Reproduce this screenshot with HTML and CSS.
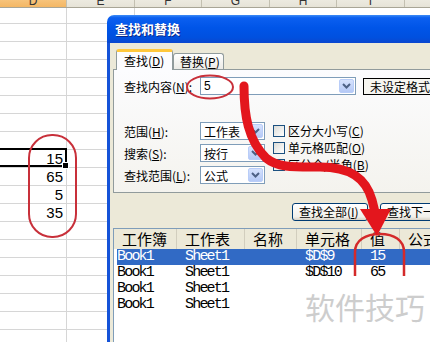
FILE: index.html
```html
<!DOCTYPE html>
<html lang="zh-CN">
<head>
<meta charset="utf-8">
<title>查找和替换</title>
<link rel="stylesheet" href="styles.css">
</head>
<body>
<div class="screen">
  <div class="sheet">
    <div class="colhead">
      <div class="ch ch-sel">D</div><div class="ch">E</div><div class="ch">F</div><div class="ch">G</div><div class="ch">H</div><div class="ch">I</div><div class="ch">J</div>
    </div>
    <div class="grid">
      <div class="row row-first"><div class="cell"></div><div class="cell"></div></div>
      <div class="row"><div class="cell"></div><div class="cell"></div></div>
      <div class="row"><div class="cell"></div><div class="cell"></div></div>
      <div class="row"><div class="cell"></div><div class="cell"></div></div>
      <div class="row"><div class="cell"></div><div class="cell"></div></div>
      <div class="row"><div class="cell"></div><div class="cell"></div></div>
      <div class="row"><div class="cell"></div><div class="cell"></div></div>
      <div class="row"><div class="cell"></div><div class="cell"></div></div>
      <div class="row"><div class="cell num active">15</div><div class="cell"></div></div>
      <div class="row"><div class="cell num">65</div><div class="cell"></div></div>
      <div class="row"><div class="cell num">5</div><div class="cell"></div></div>
      <div class="row"><div class="cell num">35</div><div class="cell"></div></div>
      <div class="row"><div class="cell"></div><div class="cell"></div></div>
      <div class="row"><div class="cell"></div><div class="cell"></div></div>
      <div class="row"><div class="cell"></div><div class="cell"></div></div>
      <div class="row"><div class="cell"></div><div class="cell"></div></div>
      <div class="row"><div class="cell"></div><div class="cell"></div></div>
      <div class="row"><div class="cell"></div><div class="cell"></div></div>
      <div class="row"><div class="cell"></div><div class="cell"></div></div>
    </div>
  </div>

  <div class="dialog">
    <div class="titlebar">查找和替换</div>
    <div class="dlg-body">
      <div class="tabs">
        <div class="tab tab-active">查找(<u>D</u>)</div>
        <div class="tab">替换(<u>P</u>)</div>
      </div>
      <div class="panel">
        <div class="find-row">
          <span class="lbl">查找内容(<u>N</u>):</span>
          <div class="combo combo-wide">
            <span class="combo-text latin">5</span>
            <span class="dd"><svg width="9" height="6" viewBox="0 0 9 6"><polyline points="1,1 4.5,4.5 8,1" fill="none" stroke="#4d6185" stroke-width="2"/></svg></span>
          </div>
          <div class="fmt-btn">未设定格式</div>
        </div>
        <div class="opts">
          <div class="opt-col">
            <div class="opt-row">
              <span class="lbl">范围(<u>H</u>):</span>
              <div class="combo combo-sm"><span class="combo-text">工作表</span><span class="dd"><svg width="9" height="6" viewBox="0 0 9 6"><polyline points="1,1 4.5,4.5 8,1" fill="none" stroke="#4d6185" stroke-width="2"/></svg></span></div>
            </div>
            <div class="opt-row">
              <span class="lbl">搜索(<u>S</u>):</span>
              <div class="combo combo-sm"><span class="combo-text">按行</span><span class="dd"><svg width="9" height="6" viewBox="0 0 9 6"><polyline points="1,1 4.5,4.5 8,1" fill="none" stroke="#4d6185" stroke-width="2"/></svg></span></div>
            </div>
            <div class="opt-row">
              <span class="lbl">查找范围(<u>L</u>):</span>
              <div class="combo combo-sm"><span class="combo-text">公式</span><span class="dd"><svg width="9" height="6" viewBox="0 0 9 6"><polyline points="1,1 4.5,4.5 8,1" fill="none" stroke="#4d6185" stroke-width="2"/></svg></span></div>
            </div>
          </div>
          <div class="chk-col">
            <div class="chk"><span class="box"></span>区分大小写(<u>C</u>)</div>
            <div class="chk"><span class="box"></span>单元格匹配(<u>O</u>)</div>
            <div class="chk"><span class="box"></span>区分全/半角(<u>B</u>)</div>
          </div>
        </div>
      </div>
      <div class="btn-row">
        <div class="btn btn-all">查找全部(<u>I</u>)</div>
        <div class="btn">查找下一个(<u>F</u>)</div>
      </div>
      <div class="list">
        <div class="lh">
          <div>工作簿</div><div>工作表</div><div>名称</div><div>单元格</div><div>值</div><div>公式</div>
        </div>
        <div class="lr lr-sel"><div>Book1</div><div>Sheet1</div><div></div><div>$D$9</div><div>15</div><div></div></div>
        <div class="lr"><div>Book1</div><div>Sheet1</div><div></div><div>$D$10</div><div>65</div><div></div></div>
        <div class="lr"><div>Book1</div><div>Sheet1</div><div></div><div></div><div></div><div></div></div>
        <div class="lr"><div>Book1</div><div>Sheet1</div><div></div><div></div><div></div><div></div></div>
      </div>
    </div>
  </div>

  <svg class="marks" width="430" height="342" viewBox="0 0 430 342">
    <rect x="29" y="135" width="47" height="102" rx="23" fill="none" stroke="#c8303a" stroke-width="2"/>
    <ellipse cx="210" cy="87" rx="23" ry="11.5" fill="none" stroke="#c8303a" stroke-width="2"/>
    <path d="M355 278 V252 C355 240 366 234 380 234 C394 234 404 240 404 252 V278" fill="none" stroke="#d42a2a" stroke-width="2.5"/>
    <path d="M244 86 C244 115 248 140 266 158 C278 168 295 167 320 167 C350 167 366 178 372 200 L375 212" fill="none" stroke="#e3161d" stroke-width="9" stroke-linecap="round"/>
    <polygon points="360,209 391,209 377,236" fill="#e3161d"/>
  </svg>

  <div class="watermark">软件技巧</div>
</div>
</body>
</html>
```

FILE: styles.css
```css
html, body {
  margin: 0;
  padding: 0;
}
body {
  width: 430px;
  height: 342px;
  overflow: hidden;
  background: #fff;
  font-family: "Noto Sans CJK SC", sans-serif;
  color: #000;
}
.screen {
  position: relative;
  width: 430px;
  height: 342px;
  overflow: hidden;
}

/* spreadsheet */
.colhead {
  display: flex;
  margin-top: -12px;
  height: 20px;
  box-sizing: border-box;
  background: linear-gradient(#f7f6f0, #e6e3d7);
  border-bottom: 1px solid #a8a596;
}
.ch {
  flex: 0 0 67px;
  box-sizing: border-box;
  border-right: 1px solid #c3c0b1;
  text-align: center;
  font: 12px/20px "Liberation Sans", sans-serif;
  padding-top: 3px;
  color: #333;
}
.ch:nth-child(even) { flex-basis: 68px; }
.ch-sel { background: linear-gradient(#fbd8a3, #f4b764); }

.row {
  display: flex;
  height: 18px;
  box-sizing: border-box;
  border-bottom: 1px solid #d6d6d6;
}
.row-first { height: 16px; }
.cell {
  width: 67px;
  height: 100%;
  box-sizing: border-box;
  border-right: 1px solid #d6d6d6;
}
.cell + .cell { width: 68px; }
.num {
  text-align: right;
  padding-right: 3px;
  font: 15px/17px "Liberation Sans", sans-serif;
}
.active { position: relative; }
.active::after {
  content: "";
  position: absolute;
  left: -2px; top: -2px; right: -1px; bottom: 0;
  border: 2px solid #000;
}
.active::before {
  content: "";
  position: absolute;
  right: -3px; bottom: -2px;
  width: 5px; height: 5px;
  background: #000;
  border: 1px solid #fff;
  z-index: 1;
}

/* dialog */
.dialog {
  position: absolute;
  left: 107px;
  top: 15px;
  width: 340px;
  height: 340px;
  display: flex;
  flex-direction: column;
}
.titlebar {
  height: 28px;
  flex: none;
  border-radius: 7px 7px 0 0;
  background: linear-gradient(#3d8cf6 0, #0b5ff0 10%, #0055e8 45%, #0050df 80%, #0a47cf 100%);
  color: #fff;
  font-weight: 700;
  font-size: 13px;
  line-height: 28px;
  padding-left: 8px;
  text-shadow: 1px 1px 0 #0a2a8a;
}
.dlg-body {
  flex: 1;
  background: #ece9d8;
  border-left: 3px solid #1553d8;
  padding: 6px 0 0 3px;
  font-size: 12px;
}
.tabs {
  display: flex;
  align-items: flex-end;
  height: 20px;
  margin-left: 3px;
}
.tab {
  position: relative;
  width: 51px;
  height: 16px;
  box-sizing: border-box;
  border: 1px solid #919b9c;
  border-bottom: none;
  border-radius: 3px 3px 0 0;
  background: linear-gradient(#ffffff, #ecebe6);
  font-size: 12px;
  line-height: 15px;
  padding-left: 6px;
  white-space: nowrap;
}
.tab-active {
  width: 57px;
  height: 21px;
  border-top: 3px solid #ffc83c;
  background: #fcfcfe;
  padding-left: 7px;
  line-height: 17px;
  margin-bottom: -1px;
  z-index: 1;
}
.panel {
  height: 124px;
  box-sizing: border-box;
  border: 1px solid #919b9c;
  background: linear-gradient(#fcfcfe, #f4f3ee);
  padding: 7px 0 0 10px;
}
.find-row {
  display: flex;
  align-items: center;
  height: 18px;
}
.lbl {
  width: 76px;
  flex: none;
  white-space: nowrap;
  font-size: 12px;
}
.combo {
  height: 18px;
  box-sizing: border-box;
  border: 1px solid #7f9db9;
  background: #fff;
  display: flex;
  align-items: center;
  flex: none;
}
.combo-wide { width: 156px; }
.combo-sm { width: 65px; }
.combo-text {
  padding-left: 3px;
  font-size: 12px;
  white-space: nowrap;
}
.latin { font-family: "Liberation Sans", sans-serif; }
.dd {
  margin-left: auto;
  margin-right: 1px;
  width: 15px;
  height: 14px;
  border-radius: 2px;
  background: linear-gradient(#d6e2fd, #b5c9f6);
  border: 1px solid #b9cdf8;
  box-sizing: border-box;
  display: flex;
  align-items: center;
  justify-content: center;
}
.fmt-btn {
  margin-left: 7px;
  height: 17px;
  box-sizing: border-box;
  border: 1px solid #000;
  background: #f6f5f0;
  padding: 0 8px 0 6px;
  line-height: 15px;
  white-space: nowrap;
  flex: none;
}
.opts {
  display: flex;
  margin-top: 27px;
}
.opt-col {
  display: flex;
  flex-direction: column;
  gap: 4px;
}
.opt-row {
  display: flex;
  align-items: center;
  height: 18px;
}
.chk-col {
  margin-left: 8px;
  display: flex;
  flex-direction: column;
}
.chk {
  display: flex;
  align-items: center;
  height: 17px;
  white-space: nowrap;
}
.box {
  width: 12px;
  height: 12px;
  box-sizing: border-box;
  border: 1px solid #1c5180;
  background: linear-gradient(135deg, #dcdcd7, #ffffff);
  margin-right: 3px;
  flex: none;
}
.btn-row {
  display: flex;
  gap: 12px;
  padding-left: 179px;
  margin-top: 10px;
}
.btn {
  height: 18px;
  box-sizing: border-box;
  border: 1px solid #003c74;
  border-radius: 3px;
  background: linear-gradient(#ffffff, #f1f0ea 80%, #d8d2c6);
  line-height: 16px;
  padding: 0 6px;
  white-space: nowrap;
  flex: none;
}
.btn-all { width: 76px; }
.list {
  margin-top: 7px;
  border: 1px solid #7f9db9;
  border-right: none;
  background: #fff;
  height: 120px;
}
.lh {
  display: grid;
  grid-template-columns: 63px 68px 52px 65px 38px 1fr;
  height: 20px;
  background: #ece9d8;
  font-size: 15px;
  line-height: 20px;
}
.lh > div {
  padding-left: 8px;
  white-space: nowrap;
  border-right: 1px solid #d2cebe;
}
.lr {
  display: grid;
  grid-template-columns: 60px 68px 52px 65px 38px 1fr;
  margin-left: 3px;
  height: 16px;
  font: 15px/16px "Liberation Mono", monospace;
  letter-spacing: -1.8px;
}
.lr > div {
  padding-left: 8px;
  white-space: nowrap;
}
.lr > div:first-child { padding-left: 0; }
.lr-sel {
  background: #316ac5;
  color: #fff;
}

/* annotations */
.marks {
  position: absolute;
  left: 0;
  top: 0;
}
.watermark {
  position: absolute;
  left: 295px;
  top: 276px;
  right: 0;
  bottom: 0;
  background: #fff;
  color: #cdcdcd;
  font-size: 30px;
  line-height: 30px;
  padding: 15px 0 0 10px;
  white-space: nowrap;
}
```
